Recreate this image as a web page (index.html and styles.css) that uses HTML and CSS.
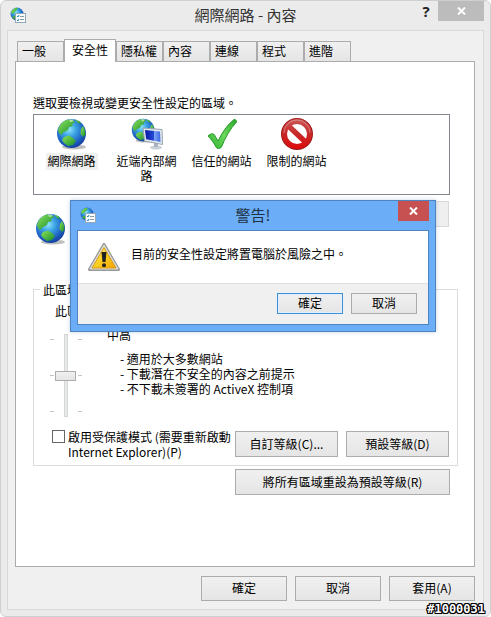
FILE: index.html
```html
<!DOCTYPE html>
<html lang="zh-Hant">
<head>
  <meta charset="UTF-8" />
  <meta name="viewport" content="width=device-width, initial-scale=1.0"/>
  <title>網際網路 - 內容</title>
  <link rel="stylesheet" href="styles.css">
</head>
<body>
  <!-- shared icons -->
  <svg class="defs" width="0" height="0" aria-hidden="true">
    <defs>
      <radialGradient id="sea" cx="0.42" cy="0.36" r="0.68">
        <stop offset="0" stop-color="#8fe3fa"/>
        <stop offset="0.35" stop-color="#3ca4e4"/>
        <stop offset="0.75" stop-color="#1c5cc0"/>
        <stop offset="1" stop-color="#123a94"/>
      </radialGradient>
      <linearGradient id="land" x1="0" y1="0" x2="1" y2="1">
        <stop offset="0" stop-color="#8fe35a"/>
        <stop offset="1" stop-color="#128a2c"/>
      </linearGradient>
      <linearGradient id="screen" x1="0" y1="0" x2="1" y2="0">
        <stop offset="0" stop-color="#0818a0"/>
        <stop offset="0.55" stop-color="#2448d8"/>
        <stop offset="0.6" stop-color="#7fa4f4"/>
        <stop offset="1" stop-color="#3c68e4"/>
      </linearGradient>
      <linearGradient id="check" x1="1" y1="0" x2="0" y2="1">
        <stop offset="0" stop-color="#2fa82c"/>
        <stop offset="0.5" stop-color="#6ad85c"/>
        <stop offset="1" stop-color="#2cae2c"/>
      </linearGradient>
      <linearGradient id="stop" gradientUnits="userSpaceOnUse" x1="0" y1="0" x2="0" y2="32">
        <stop offset="0" stop-color="#cc5a5a"/>
        <stop offset="0.5" stop-color="#c82828"/>
        <stop offset="1" stop-color="#e00808"/>
      </linearGradient>
      <linearGradient id="warn" x1="0" y1="0" x2="1" y2="1">
        <stop offset="0" stop-color="#fff08a"/>
        <stop offset="0.5" stop-color="#fcd023"/>
        <stop offset="1" stop-color="#f0a000"/>
      </linearGradient>
      <symbol id="globe" viewBox="0 0 32 32">
        <ellipse cx="18" cy="29" rx="12" ry="2.4" fill="#000" opacity="0.25"/>
        <circle cx="15.5" cy="15.5" r="14.5" fill="url(#sea)"/>
        <path fill="url(#land)" d="M3 9C5 5 8 2.500 12 1.500L17 2L19 4L16 6L17 8L13 9L12 12L8 14L5 17L3 15L2 12Z"/>
        <path fill="url(#land)" d="M19 1.500L24 3.500L25 6L22 5Z"/>
        <path fill="url(#land)" d="M8 19L13 17.500L17 20L20 23L17 27L12 28L8 25L6 22Z"/>
        <path fill="url(#land)" d="M27 8L29 12L29.500 17L27 19L24.500 16L25 11Z"/>
        <path fill="#fff" opacity="0.5" d="M13 1.500L18 1.500L16 4L14 4Z"/>
      </symbol>
      <symbol id="options" viewBox="0 0 16 16">
        <circle cx="7" cy="7" r="6.500" fill="url(#sea)"/>
        <path fill="url(#land)" d="M1.500 4L5 1L8 1L6 4L4 6L1.500 7ZM2 10L5 8.500L6 12L4 12Z"/>
        <rect x="5.500" y="6.500" width="10" height="9" fill="#fbfcfd" stroke="#93a8b6"/>
        <path d="M7 9L8 10L9 8M7 13L8 14L9 12" fill="none" stroke="#2689c8"/>
        <path d="M10 9.500H14M10 12.500H14" stroke="#8b9ba6"/>
      </symbol>
    </defs>
  </svg>

  <main class="window">
    <header class="titlebar">
      <svg class="app-icon"><use href="#options"/></svg>
      <h1>網際網路 - 內容</h1>
      <button class="help" type="button">?</button>
      <button class="close" type="button" aria-label="關閉">
        <svg width="9" height="8" viewBox="0 0 9 8"><path d="M1 0.500L8 7.500M8 0.500L1 7.500" stroke="#fff" stroke-width="2"/></svg>
      </button>
    </header>

    <div class="client">
      <nav class="tabs">
        <button class="tab" type="button">一般</button>
        <button class="tab selected" type="button">安全性</button>
        <button class="tab" type="button">隱私權</button>
        <button class="tab" type="button">內容</button>
        <button class="tab" type="button">連線</button>
        <button class="tab" type="button">程式</button>
        <button class="tab" type="button">進階</button>
      </nav>

      <section class="panel">
        <p class="intro">選取要檢視或變更安全性設定的區域。</p>
        <ul class="zones">
          <li class="zone current">
            <svg><use href="#globe"/></svg>
            <span>網際網路</span>
          </li>
          <li class="zone">
            <svg viewBox="0 0 32 32">
              <use href="#globe" width="25" height="25"/>
              <ellipse cx="25" cy="29.500" rx="6" ry="2" fill="#c9d0d8"/>
              <path d="M23 24H27V29H23Z" fill="#aab4c0"/>
              <path d="M12 10L31 11.500L31.500 26.500L13.500 23Z" fill="#e4e9ef" stroke="#98a3b0"/>
              <path d="M14 12L29 13.500L29.500 24L15.200 21.300Z" fill="url(#screen)"/>
            </svg>
            <span>近端內部網路</span>
          </li>
          <li class="zone">
            <svg viewBox="0 0 32 32">
              <path d="M2 18C5 15 8 15 9 18L12 23C16 15 21 7 28 1.500C30 1.500 31 3 30.500 4C24 11 19 20 15.500 29C14 31 11 31 10 29C8 25 5 21 2 18Z" fill="url(#check)" stroke="#279a2b"/>
            </svg>
            <span>信任的網站</span>
          </li>
          <li class="zone">
            <svg viewBox="0 0 32 32">
              <circle cx="16" cy="16" r="12.500" fill="none" stroke="#a01818" stroke-width="7"/>
              <circle cx="16" cy="16" r="12.500" fill="#fff" stroke="url(#stop)" stroke-width="5"/>
              <path d="M7 7.500L25 24.500" stroke="url(#stop)" stroke-width="5.500"/>
              <path d="M3 15A13 13 0 0 1 29 15" fill="none" stroke="#fff" opacity="0.3"/>
            </svg>
            <span>限制的網站</span>
          </li>
        </ul>

        <div class="zone-info">
          <svg><use href="#globe"/></svg>
          <button type="button" disabled aria-label="網站"></button>
        </div>

        <fieldset class="level">
          <legend>此區域</legend>
          <p class="allowed">此區域</p>
          <div class="level-row">
            <div class="slider">
              <input type="range" min="0" max="2" value="1" aria-label="中高">
            </div>
            <div class="level-text">
              <p>中高</p>
              <ul>
                <li>- 適用於大多數網站</li>
                <li>- 下載潛在不安全的內容之前提示</li>
                <li>- 不下載未簽署的 ActiveX 控制項</li>
              </ul>
            </div>
          </div>
          <div class="actions">
            <label class="protected">
              <input type="checkbox">
              <span>啟用受保護模式 (需要重新啟動 Internet Explorer)(P)</span>
            </label>
            <button type="button">自訂等級(C)...</button>
            <button type="button">預設等級(D)</button>
          </div>
        </fieldset>
        <button class="reset" type="button">將所有區域重設為預設等級(R)</button>
      </section>

      <footer class="footer">
        <button type="button">確定</button>
        <button type="button">取消</button>
        <button type="button">套用(A)</button>
      </footer>
    </div>

    <dialog class="alert" open aria-labelledby="alert-title">
      <div class="alert-bar">
        <svg class="app-icon"><use href="#options"/></svg>
        <h2 id="alert-title">警告!</h2>
        <button class="alert-close" type="button" aria-label="關閉">
          <svg width="9" height="8" viewBox="0 0 9 8"><path d="M1 0.500L8 7.500M8 0.500L1 7.500" stroke="#fff" stroke-width="2"/></svg>
        </button>
      </div>
      <div class="alert-body">
        <div class="alert-message">
          <svg viewBox="0 0 32 28">
            <path d="M16 1.500L30.500 26.500H1.500Z" fill="#999" stroke="#999" stroke-width="3" stroke-linejoin="round"/>
            <path d="M16 2L30 26H2Z" fill="#ddd" stroke="#ddd" stroke-width="1" stroke-linejoin="round"/>
            <path d="M16 4.500L28 25H4Z" fill="url(#warn)" stroke="#d89c10"/>
            <path d="M13.500 9H18.500L17.500 19H14.500Z" fill="#222"/>
            <circle cx="16" cy="22.300" r="2" fill="#222"/>
          </svg>
          <p>目前的安全性設定將置電腦於風險之中。</p>
        </div>
        <div class="alert-buttons">
          <button class="default" type="button">確定</button>
          <button type="button">取消</button>
        </div>
      </div>
    </dialog>

    <span class="stamp">#1000031</span>
  </main>
</body>
</html>
```
FILE: styles.css
```css
* {
  box-sizing: border-box;
}

body {
  margin: 0;
  background: white;
  color: #000;
  font-family: "Noto Sans CJK TC", "Noto Sans", sans-serif;
  font-size: 12px;
  line-height: 15px;
}

h1, h2, p, ul {
  margin: 0;
  padding: 0;
}

ul {
  list-style: none;
}

svg {
  display: block;
  flex: none;
}

.defs {
  position: absolute;
}

button {
  height: 26px;
  padding: 0 0 2px;
  border: 1px solid #acacac;
  background: linear-gradient(#f0f0f0, #e5e5e5);
  color: #000;
  font: inherit;
}

/* window frame */
.window {
  position: relative;
  padding: 0 6px 6px;
  border: 1px solid #cfcfcf;
  border-radius: 6px;
  background: #ebebeb;
}

.titlebar {
  display: grid;
  grid-template-columns: 70px 1fr 24px 46px;
  height: 29px;
}

.app-icon {
  width: 16px;
  height: 16px;
  margin: 6px 0 0 3px;
}

h1, h2 {
  color: #333;
  font-size: 15px;
  font-weight: normal;
  line-height: 28px;
  text-align: center;
}

.help {
  height: 20px;
  padding: 0;
  border: none;
  background: none;
  color: #222;
  font-family: "Open Sans", sans-serif;
  font-size: 15px;
  font-weight: bold;
}

.close {
  display: grid;
  place-items: center;
  height: 20px;
  padding: 0;
  border: none;
  background: #bcbcbc;
}

.client {
  padding: 8px 8px 8px 7px;
  border: 1px solid #d9d9d9;
  background: #f0f0f0;
}

/* tabs */
.tabs {
  display: flex;
  align-items: flex-end;
  padding-left: 2px;
}

.tab {
  width: 47px;
  height: 20px;
  padding-left: 4px;
  border-bottom: none;
  text-align: left;
  white-space: nowrap;
}

.tab.selected {
  position: relative;
  width: 52px;
  height: 23px;
  margin-bottom: -1px;
  padding-bottom: 4px;
  padding-left: 7px;
  background: white;
}

.panel {
  padding: 33px 16px 71px 17px;
  border: 1px solid #acacac;
  background: white;
}

.intro {
  margin-bottom: 4px;
}

.zones {
  display: flex;
  height: 81px;
  margin-right: 8px;
  padding: 3px 0 0;
  border: 1px solid #828790;
}

.zone {
  display: flex;
  flex-direction: column;
  align-items: center;
  width: 75px;
  text-align: center;
}

.zone svg {
  width: 32px;
  height: 32px;
}

.zone span {
  width: 64px;
  margin-top: 3px;
}

.zone.current span {
  width: 52px;
  padding-bottom: 2px;
  background: #f0f0f0;
}

.zone-info {
  display: flex;
  justify-content: space-between;
  height: 87px;
  margin-right: 9px;
  padding: 6px 0 0 2px;
}

.zone-info svg {
  width: 32px;
  height: 32px;
  margin-top: 12px;
}

.zone-info button {
  width: 104px;
  border-color: #d9d9d9;
  background: #efefef;
}

/* security level */
.level {
  margin: 0;
  padding: 6px 8px 6px 16px;
  border: 1px solid #dcdcdc;
}

.level legend {
  margin-left: -10px;
  padding: 0 3px;
}

.allowed {
  margin: 0 0 9px 5px;
}

.level-row {
  display: flex;
  gap: 25px;
}

/* tick marks on both sides of the track */
.slider {
  width: 32px;
  height: 83px;
  margin-top: 7px;
  background:
    linear-gradient(#c4c4c4, #c4c4c4) 0 5px / 4px 1px,
    linear-gradient(#c4c4c4, #c4c4c4) 100% 5px / 4px 1px,
    linear-gradient(#c4c4c4, #c4c4c4) 0 41px / 4px 1px,
    linear-gradient(#c4c4c4, #c4c4c4) 100% 41px / 4px 1px,
    linear-gradient(#c4c4c4, #c4c4c4) 0 77px / 4px 1px,
    linear-gradient(#c4c4c4, #c4c4c4) 100% 77px / 4px 1px;
  background-repeat: no-repeat;
}

.slider input {
  display: block;
  width: 22px;
  height: 83px;
  margin: 0 auto;
  background: none;
  appearance: none;
  writing-mode: vertical-lr;
}

.slider input::-webkit-slider-runnable-track {
  width: 4px;
  border: 1px solid #d6d6d6;
  background: #e7eaea;
}

.slider input::-webkit-slider-thumb {
  width: 21px;
  height: 10px;
  margin-left: -10px;
  border: 1px solid #acacac;
  background: linear-gradient(#f0f0f0, #e5e5e5);
  appearance: none;
}

.level-text ul {
  margin: 9px 0 0 13px;
}

.actions {
  display: flex;
  align-items: center;
  gap: 8px;
  margin-top: 12px;
}

.actions button {
  width: 103px;
}

.protected {
  display: flex;
  flex: 1;
  gap: 3px;
  margin-right: -5px;
  padding-left: 2px;
}

.protected input {
  flex: none;
  width: 13px;
  height: 13px;
  margin: 1px 0 0;
  border: 1px solid #666;
  background: white;
  appearance: none;
}

.reset {
  display: block;
  width: 215px;
  margin: 3px 8px 0 auto;
}

.footer {
  display: flex;
  justify-content: flex-end;
  gap: 8px;
  margin-top: 9px;
}

.footer button {
  width: 86px;
  height: 25px;
}

/* warning box */
.alert {
  position: absolute;
  top: 199px;
  left: 69px;
  width: 366px;
  margin: 0;
  padding: 0 6px 6px;
  border: 1px solid #4d84bf;
  background: #6badf6;
  box-shadow: 0 0 4px rgba(60, 100, 160, 0.3);
  color: #000;
}

.alert-bar {
  display: grid;
  grid-template-columns: 31px 1fr 31px;
  height: 29px;
}

.alert h2 {
  color: #1d3045;
}

.alert-close {
  display: grid;
  place-items: center;
  height: 20px;
  padding: 0;
  border: none;
  background: #c75050;
}

.alert-body {
  border: 1px solid #4d84bf;
  background: #f0f0f0;
}

.alert-message {
  display: flex;
  gap: 11px;
  height: 53px;
  padding: 12px 10px 0;
  border-bottom: 1px solid #dfdfdf;
  background: white;
}

.alert-message svg {
  width: 32px;
  height: 28px;
}

.alert-message p {
  margin-top: 3px;
}

.alert-buttons {
  display: flex;
  justify-content: flex-end;
  gap: 8px;
  padding: 9px 11px 10px;
}

.alert-buttons button {
  width: 66px;
  height: 21px;
}

.alert-buttons .default {
  border-color: #3c8fd8;
  box-shadow: inset 0 0 0 1px #dff0fc;
}

.stamp {
  position: absolute;
  right: 5px;
  bottom: 0;
  color: white;
  font-family: "DejaVu Sans Mono", monospace;
  font-size: 12px;
  font-weight: bold;
  line-height: 13px;
  text-shadow: -1px -1px #000, 1px -1px #000, -1px 1px #000, 1px 1px #000, 0 -1px #000, 0 1px #000, -1px 0 #000, 1px 0 #000;
}
```
